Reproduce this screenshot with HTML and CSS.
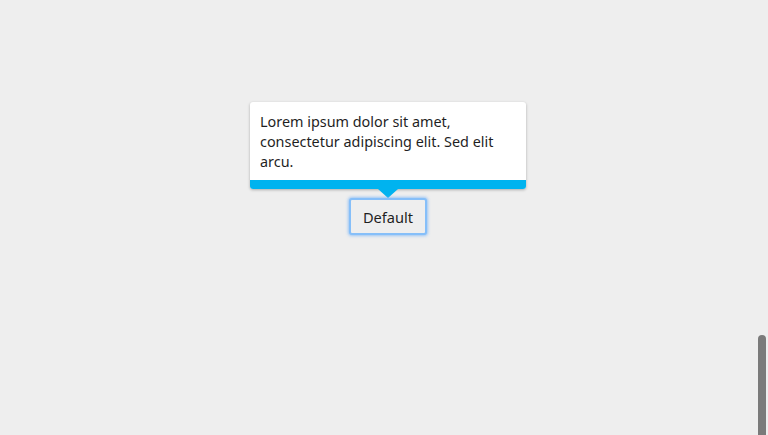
FILE: index.html
```html
<!DOCTYPE html>
<html>
<head>
<meta charset="utf-8">
<link rel="stylesheet" href="styles.css">
</head>
<body>
<div class="stage">
  <div class="tooltip">
    <div class="tooltip-body">Lorem ipsum dolor sit amet, consectetur adipiscing elit. Sed elit arcu.</div>
    <div class="tooltip-bar"></div>
  </div>
  <div class="arrow"></div>
  <button class="btn">Default</button>
</div>
<div class="scroll-thumb"></div>
</body>
</html>
```
FILE: styles.css
```css
html, body {
  margin: 0;
  padding: 0;
  height: 100%;
  overflow: hidden;
}
body {
  background: #eeeeee;
  font-family: "Noto Sans", "Open Sans", sans-serif;
  color: #1f1f1f;
}
.stage {
  display: flex;
  flex-direction: column;
  align-items: center;
  padding-top: 102px;
  padding-left: 8px;
}
.tooltip {
  width: 276px;
  background: #fff;
  border-radius: 3px;
  box-shadow: 0 1px 3px rgba(0,0,0,0.28);
  overflow: hidden;
}
.tooltip-body {
  padding: 10px 10px 8px 10px;
  font-size: 14.4px;
  line-height: 20px;
}
.tooltip-bar {
  height: 9px;
  background: #00b3ef;
}
.arrow {
  width: 0;
  height: 0;
  border-left: 10px solid transparent;
  border-right: 10px solid transparent;
  border-top: 9px solid #00b3ef;
}
.btn {
  margin-top: 0;
  width: 78px;
  height: 37px;
  background: #eeeeee;
  border: 2px solid #86bff9;
  border-radius: 3px;
  box-shadow: 0 0 3px 1px rgba(100,170,250,0.6);
  font-family: "Noto Sans", "Open Sans", sans-serif;
  font-size: 14.6px;
  color: #1f1f1f;
  padding: 0;
}
.scroll-thumb {
  position: absolute;
  right: 2px;
  top: 335px;
  bottom: 0;
  width: 8px;
  background: #7a7a7a;
  border-radius: 4px 4px 0 0;
}
```
